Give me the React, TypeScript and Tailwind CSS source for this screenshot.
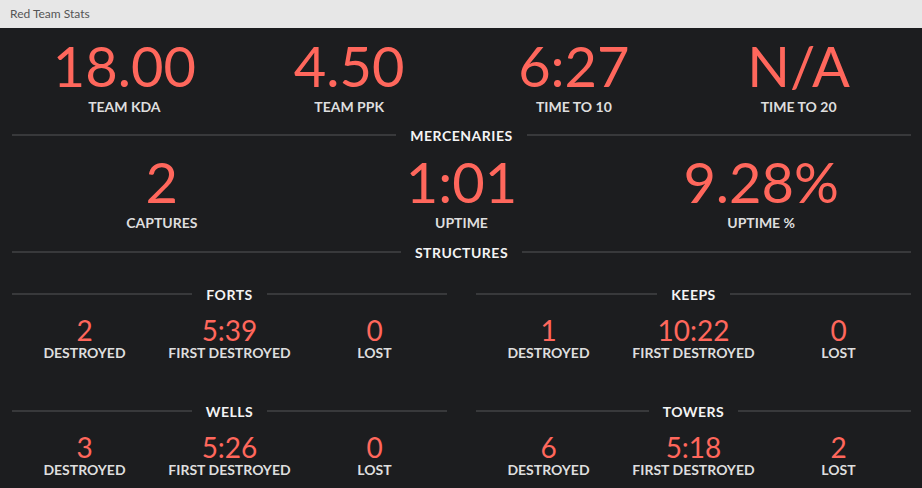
import type { ReactNode } from 'react'

const font = { fontFamily: 'Lato, "Open Sans", sans-serif' }

interface StatProps {
  value: string
  label: string
  size: 'lg' | 'sm'
}

function Stat({ value, label, size }: StatProps) {
  return (
    <div className="flex flex-col items-center">
      <span
        className={
          size === 'lg'
            ? 'text-[56px] leading-[56px] text-[#ff675c]'
            : 'text-[28px] leading-[28px] text-[#ff675c]'
        }
      >
        {value}
      </span>
      <span
        className={
          size === 'lg'
            ? 'mt-[4px] text-[14px] leading-[17px] font-bold text-[#dedede]'
            : 'text-[14px] leading-[17px] font-bold text-[#dedede]'
        }
      >
        {label}
      </span>
    </div>
  )
}

function Divider({ children }: { children: ReactNode }) {
  return (
    <div className="flex items-center gap-[14px]">
      <div className="flex-1 h-[2px] bg-[#38393b] -translate-y-[1px]" />
      <span className="text-[14px] leading-[17px] font-bold text-[#f4f4f4] tracking-[0.5px]">{children}</span>
      <div className="flex-1 h-[2px] bg-[#38393b] -translate-y-[1px]" />
    </div>
  )
}

interface Group {
  title: string
  destroyed: string
  first: string
  lost: string
}

function StructureGroup({ group }: { group: Group }) {
  return (
    <div className="flex flex-col">
      <Divider>{group.title}</Divider>
      <div className="grid grid-cols-3 mt-[13px]">
        <Stat size="sm" value={group.destroyed} label="DESTROYED" />
        <Stat size="sm" value={group.first} label="FIRST DESTROYED" />
        <Stat size="sm" value={group.lost} label="LOST" />
      </div>
    </div>
  )
}

const forts: Group = { title: 'FORTS', destroyed: '2', first: '5:39', lost: '0' }
const keeps: Group = { title: 'KEEPS', destroyed: '1', first: '10:22', lost: '0' }
const wells: Group = { title: 'WELLS', destroyed: '3', first: '5:26', lost: '0' }
const towers: Group = { title: 'TOWERS', destroyed: '6', first: '5:18', lost: '2' }

export default function App() {
  return (
    <div className="w-[922px] h-[488px] overflow-hidden bg-[#1c1d1f] flex flex-col" style={font}>
      <div className="h-[28px] shrink-0 bg-[#e7e7e7] flex items-center px-[10px] text-[12px] text-[#555]">
        Red Team Stats
      </div>
      <div className="pl-[12px] pr-[11px] pt-[10px] flex flex-col">
        <div className="grid grid-cols-4">
          <Stat size="lg" value="18.00" label="TEAM KDA" />
          <Stat size="lg" value="4.50" label="TEAM PPK" />
          <Stat size="lg" value="6:27" label="TIME TO 10" />
          <Stat size="lg" value="N/A" label="TIME TO 20" />
        </div>
        <div className="mt-[12px]">
          <Divider>MERCENARIES</Divider>
        </div>
        <div className="grid grid-cols-3 mt-[10px]">
          <Stat size="lg" value="2" label="CAPTURES" />
          <Stat size="lg" value="1:01" label="UPTIME" />
          <Stat size="lg" value="9.28%" label="UPTIME %" />
        </div>
        <div className="mt-[13px]">
          <Divider>STRUCTURES</Divider>
        </div>
        <div className="grid grid-cols-2 gap-x-[29px] gap-y-[42px] mt-[25px]">
          <StructureGroup group={forts} />
          <StructureGroup group={keeps} />
          <StructureGroup group={wells} />
          <StructureGroup group={towers} />
        </div>
      </div>
    </div>
  )
}
